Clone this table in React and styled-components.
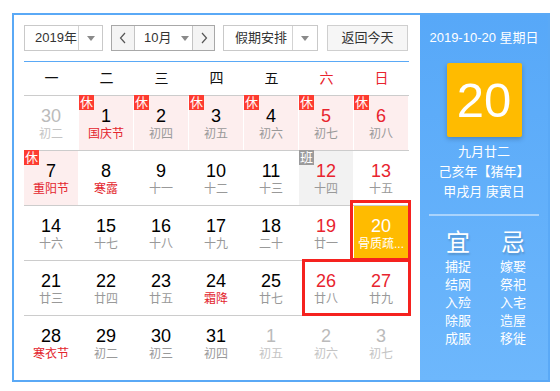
import React from 'react'
import styled, { createGlobalStyle } from 'styled-components'

const GlobalStyle = createGlobalStyle`
  body {
    margin: 0;
    background: #fff;
    font-family: "Liberation Sans", "Noto Sans CJK SC", sans-serif;
  }
`

const Frame = styled.div`
  box-sizing: border-box;
  margin: 13px 0 0 12px;
  width: 538px;
  height: 369px;
  border: 2px solid #5aa9f6;
  display: flex;
`

const Main = styled.div`
  box-sizing: border-box;
  width: 406px;
  padding: 10px 0 0 10px;
`

const Toolbar = styled.div`
  display: flex;
  gap: 8px;
  height: 26px;
  width: 385px;
`

const Select = styled.div`
  box-sizing: border-box;
  display: flex;
  height: 26px;
  width: ${(p) => p.$width}px;
  border: 1px solid #c9c9c9;
  background: #fff;
  font-size: 13px;
  color: #333;
`

const SelectText = styled.div`
  flex: 1;
  min-width: 0;
  padding-left: ${(p) => p.$pad}px;
  line-height: 24px;
  white-space: nowrap;
  overflow: hidden;
`

const SelectArrow = styled.div`
  flex: none;
  width: ${(p) => p.$width}px;
  border-left: 1px solid #d3d3d3;
  display: flex;
  align-items: center;
  justify-content: center;
  &::after {
    content: '';
    border-left: 4px solid transparent;
    border-right: 4px solid transparent;
    border-top: 5px solid #8a8a8a;
  }
`

const MonthGroup = styled.div`
  box-sizing: border-box;
  display: flex;
  width: 104px;
  height: 26px;
  border: 1px solid #a8a8a8;
  font-size: 13px;
  color: #333;
`

const StepButton = styled.div`
  width: ${(p) => p.$width}px;
  background: #f4f4f4;
  display: flex;
  align-items: center;
  justify-content: center;
  border-left: ${(p) => (p.$divider ? '1px solid #c4c4c4' : 'none')};
  border-right: ${(p) => (p.$dividerRight ? '1px solid #c4c4c4' : 'none')};
`

const MonthValue = styled.div`
  flex: 1;
  display: flex;
  align-items: center;
  padding-left: 9px;
  gap: 10px;
  line-height: 24px;
  white-space: nowrap;
  &::after {
    content: '';
    border-left: 4px solid transparent;
    border-right: 4px solid transparent;
    border-top: 5px solid #8a8a8a;
  }
`

const ReturnButton = styled.div`
  box-sizing: border-box;
  margin-left: 1px;
  width: 81px;
  height: 26px;
  border: 1px solid #cfcfcf;
  background: #f6f6f6;
  font-size: 13px;
  color: #333;
  text-align: center;
  line-height: 24px;
  white-space: nowrap;
`

const BlueLine = styled.div`
  margin-top: 10px;
  width: 385px;
  height: 1px;
  background: #5aa9f6;
`

const WeekHeader = styled.div`
  display: flex;
  width: 385px;
  height: 33px;
`

const WeekDay = styled.div`
  width: 55px;
  text-align: center;
  line-height: 33px;
  font-size: 14px;
  color: ${(p) => (p.$weekend ? '#e8242e' : '#111')};
`

const Week = styled.div`
  box-sizing: border-box;
  display: flex;
  width: 385px;
  height: 55px;
  border-top: 1px solid #cccccc;
`

const Cell = styled.div`
  position: relative;
  width: 54px;
  height: 54px;
  margin-right: 1px;
  text-align: center;
  background: ${(p) =>
    p.$today ? '#ffbb00' : p.$rest ? '#fdeeee' : p.$work ? '#f2f2f2' : 'transparent'};
  ${(p) =>
    p.$today &&
    `&::after {
      content: '';
      position: absolute;
      top: -6px;
      left: -4px;
      right: -3px;
      bottom: -1px;
      border: 3px solid #f5221f;
    }`}
`

const Num = styled.div`
  padding-top: 10px;
  font-size: 18px;
  line-height: 20px;
  color: ${(p) =>
    p.$today ? '#fff' : p.$other ? '#bbbbbb' : p.$weekend ? '#e8242e' : '#000'};
`

const Lunar = styled.div`
  font-size: 12px;
  line-height: 16px;
  white-space: nowrap;
  color: ${(p) =>
    p.$today ? '#fff' : p.$other ? '#c4c4c4' : p.$fest ? '#e3262e' : '#999'};
`

const Badge = styled.div`
  position: absolute;
  top: -1px;
  left: 0;
  width: 15px;
  height: 15px;
  font-size: 13px;
  line-height: 15px;
  color: #fff;
  background: ${(p) => (p.$work ? '#9b9b9b' : '#fd3b30')};
`

const Weekend = styled.div`
  position: relative;
  display: flex;
  &::after {
    content: '';
    position: absolute;
    top: -2px;
    left: 3px;
    right: -2px;
    bottom: -1px;
    border: 3px solid #f5221f;
    pointer-events: none;
  }
`

const Side = styled.div`
  width: 128px;
  display: flex;
  flex-direction: column;
  align-items: center;
  background: linear-gradient(#57a8f8, #6db7fc);
  color: #fff;
`

const SideDate = styled.div`
  padding-top: 15px;
  font-size: 13px;
  line-height: 16px;
  white-space: nowrap;
`

const BigDay = styled.div`
  margin-top: 17px;
  width: 75px;
  height: 74px;
  border-radius: 2px;
  background: #ffbb00;
  box-shadow: 0 2px 5px rgba(0, 0, 0, 0.22);
  font-size: 49px;
  line-height: 74px;
  text-align: center;
`

const LunarInfo = styled.div`
  margin-top: 5px;
  font-size: 13px;
  line-height: 20px;
  text-align: center;
`

const SideLine = styled.div`
  margin-top: 12px;
  width: 110px;
  height: 2px;
  background: rgba(255, 255, 255, 0.45);
`

const Almanac = styled.div`
  display: flex;
  margin-top: 12px;
  padding-left: 3px;
`

const AlmanacCol = styled.div`
  width: 55px;
  text-align: center;
`

const AlmanacTitle = styled.div`
  font-size: 24px;
  line-height: 30px;
  text-shadow: 1px 2px 2px rgba(0, 0, 0, 0.18);
`

const AlmanacItem = styled.div`
  font-size: 13px;
  line-height: 18px;
`

const Chevron = ({ dir }) => (
  <svg width="8" height="12" viewBox="0 0 8 12">
    <polyline
      points={dir === 'left' ? '6,1 1.5,6 6,11' : '2,1 6.5,6 2,11'}
      fill="none"
      stroke="#555"
      strokeWidth="1.2"
    />
  </svg>
)

const weeks = [
  [
    { d: 30, l: '初二', other: true },
    { d: 1, l: '国庆节', fest: true, rest: true },
    { d: 2, l: '初四', rest: true },
    { d: 3, l: '初五', rest: true },
    { d: 4, l: '初六', rest: true },
    { d: 5, l: '初七', rest: true },
    { d: 6, l: '初八', rest: true },
  ],
  [
    { d: 7, l: '重阳节', fest: true, rest: true },
    { d: 8, l: '寒露', fest: true },
    { d: 9, l: '十一' },
    { d: 10, l: '十二' },
    { d: 11, l: '十三' },
    { d: 12, l: '十四', work: true },
    { d: 13, l: '十五' },
  ],
  [
    { d: 14, l: '十六' },
    { d: 15, l: '十七' },
    { d: 16, l: '十八' },
    { d: 17, l: '十九' },
    { d: 18, l: '二十' },
    { d: 19, l: '廿一' },
    { d: 20, l: '骨质疏...', today: true },
  ],
  [
    { d: 21, l: '廿三' },
    { d: 22, l: '廿四' },
    { d: 23, l: '廿五' },
    { d: 24, l: '霜降', fest: true },
    { d: 25, l: '廿七' },
    { d: 26, l: '廿八' },
    { d: 27, l: '廿九' },
  ],
  [
    { d: 28, l: '寒衣节', fest: true },
    { d: 29, l: '初二' },
    { d: 30, l: '初三' },
    { d: 31, l: '初四' },
    { d: 1, l: '初五', other: true },
    { d: 2, l: '初六', other: true },
    { d: 3, l: '初七', other: true },
  ],
]

const weekDays = ['一', '二', '三', '四', '五', '六', '日']
const good = ['捕捉', '结网', '入殓', '除服', '成服']
const bad = ['嫁娶', '祭祀', '入宅', '造屋', '移徙']

const DayCell = ({ day, col }) => (
  <Cell $today={day.today} $rest={day.rest} $work={day.work}>
    {day.rest && <Badge>休</Badge>}
    {day.work && <Badge $work>班</Badge>}
    <Num $today={day.today} $other={day.other} $weekend={col >= 5}>
      {day.d}
    </Num>
    <Lunar $today={day.today} $other={day.other} $fest={day.fest}>
      {day.l}
    </Lunar>
  </Cell>
)

export default function App() {
  return (
    <>
      <GlobalStyle />
      <Frame>
        <Main>
          <Toolbar>
            <Select $width={79}>
              <SelectText $pad={10}>2019年</SelectText>
              <SelectArrow $width={23} />
            </Select>
            <MonthGroup>
              <StepButton $width={22} $dividerRight>
                <Chevron dir="left" />
              </StepButton>
              <MonthValue>10月</MonthValue>
              <StepButton $width={21} $divider>
                <Chevron dir="right" />
              </StepButton>
            </MonthGroup>
            <Select $width={95}>
              <SelectText $pad={11}>假期安排</SelectText>
              <SelectArrow $width={24} />
            </Select>
            <ReturnButton>返回今天</ReturnButton>
          </Toolbar>
          <BlueLine />
          <WeekHeader>
            {weekDays.map((w, i) => (
              <WeekDay key={w} $weekend={i >= 5}>
                {w}
              </WeekDay>
            ))}
          </WeekHeader>
          {weeks.map((week, wi) => (
            <Week key={wi}>
              {wi === 3 ? (
                <>
                  {week.slice(0, 5).map((day, i) => (
                    <DayCell key={i} day={day} col={i} />
                  ))}
                  <Weekend>
                    {week.slice(5).map((day, i) => (
                      <DayCell key={i} day={day} col={i + 5} />
                    ))}
                  </Weekend>
                </>
              ) : (
                week.map((day, i) => <DayCell key={i} day={day} col={i} />)
              )}
            </Week>
          ))}
        </Main>
        <Side>
          <SideDate>2019-10-20 星期日</SideDate>
          <BigDay>20</BigDay>
          <LunarInfo>
            九月廿二
            <br />
            己亥年【猪年】
            <br />
            甲戌月 庚寅日
          </LunarInfo>
          <SideLine />
          <Almanac>
            <AlmanacCol>
              <AlmanacTitle>宜</AlmanacTitle>
              {good.map((g) => (
                <AlmanacItem key={g}>{g}</AlmanacItem>
              ))}
            </AlmanacCol>
            <AlmanacCol>
              <AlmanacTitle>忌</AlmanacTitle>
              {bad.map((b) => (
                <AlmanacItem key={b}>{b}</AlmanacItem>
              ))}
            </AlmanacCol>
          </Almanac>
        </Side>
      </Frame>
    </>
  )
}
